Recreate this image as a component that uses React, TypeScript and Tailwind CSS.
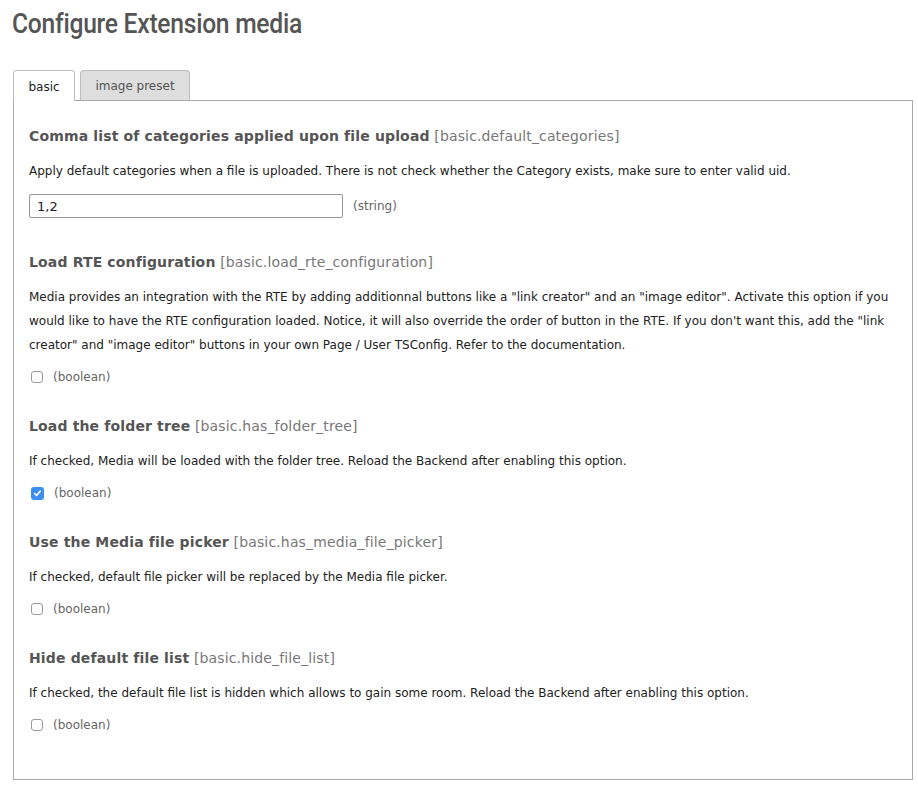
import React from 'react'

type Field = {
  title: string
  key: string
  desc: string
  type: 'string' | 'boolean'
  value?: string
  checked?: boolean
}

const fields: Field[] = [
  {
    title: 'Comma list of categories applied upon file upload',
    key: '[basic.default_categories]',
    desc: 'Apply default categories when a file is uploaded. There is not check whether the Category exists, make sure to enter valid uid.',
    type: 'string',
    value: '1,2',
  },
  {
    title: 'Load RTE configuration',
    key: '[basic.load_rte_configuration]',
    desc: 'Media provides an integration with the RTE by adding additionnal buttons like a "link creator" and an "image editor". Activate this option if you would like to have the RTE configuration loaded. Notice, it will also override the order of button in the RTE. If you don\'t want this, add the "link creator" and "image editor" buttons in your own Page / User TSConfig. Refer to the documentation.',
    type: 'boolean',
  },
  {
    title: 'Load the folder tree',
    key: '[basic.has_folder_tree]',
    desc: 'If checked, Media will be loaded with the folder tree. Reload the Backend after enabling this option.',
    type: 'boolean',
    checked: true,
  },
  {
    title: 'Use the Media file picker',
    key: '[basic.has_media_file_picker]',
    desc: 'If checked, default file picker will be replaced by the Media file picker.',
    type: 'boolean',
  },
  {
    title: 'Hide default file list',
    key: '[basic.hide_file_list]',
    desc: 'If checked, the default file list is hidden which allows to gain some room. Reload the Backend after enabling this option.',
    type: 'boolean',
  },
]

function Checkbox({ checked }: { checked?: boolean }) {
  if (checked) {
    return (
      <span className="flex h-[13px] w-[13px] items-center justify-center rounded-[3px] bg-[#3b8ff0]">
        <svg width="9" height="9" viewBox="0 0 9 9" fill="none">
          <path d="M1.8 4.6L3.6 6.4L7.2 2.2" stroke="white" strokeWidth="1.6" strokeLinecap="round" strokeLinejoin="round" />
        </svg>
      </span>
    )
  }
  return <span className="block h-[12px] w-[12px] rounded-[3px] border border-[#9a9a9a] bg-white" />
}

export default function App() {
  return (
    <div className="min-h-[787px] bg-white pl-[13px] pr-[5px] pt-[6px] font-['DejaVu_Sans',Verdana,sans-serif] text-[#333]">
      <h1 className="-ml-[1px] inline-block origin-left scale-x-[0.88] font-['Roboto',sans-serif] text-[28px] font-medium leading-[36px] tracking-[-0.3px] text-[#555]">
        Configure Extension media
      </h1>

      {/* Tabs */}
      <div className="mt-[28px] flex items-end gap-[5px]">
        <div className="relative z-10 -mb-px flex h-[31px] w-[62px] items-center justify-center rounded-t-[4px] border border-b-0 border-[#bbb] bg-white pt-[2px] text-[12px] text-[#222]">
          basic
        </div>
        <div className="flex h-[30px] w-[110px] items-center justify-center rounded-t-[4px] border border-b-0 border-[#bbb] bg-[#dedede] text-[12px] text-[#555]">
          image preset
        </div>
      </div>

      {/* Panel */}
      <div className="w-[900px] border border-[#aaa] px-[15px] pb-[42px] pt-[25px]">
        {fields.map((f, i) => (
          <div key={f.key} className={i === 0 ? '' : fields[i - 1].type === 'string' ? 'mt-[34px]' : 'mt-[27px]'}>
            <h3 className="text-[14px] leading-[20px] tracking-[0.15px]">
              <span className="font-bold text-[#555]">{f.title}</span>{' '}
              <span className="text-[#777]">{f.key}</span>
            </h3>
            <p className="mt-[13px] text-[12px] leading-[24px] text-[#222]">{f.desc}</p>
            {f.type === 'string' ? (
              <div className="mt-[11px] flex items-center gap-[10px]">
                <input
                  defaultValue={f.value}
                  className="h-[24px] w-[314px] rounded-[2px] border border-[#999] px-[7px] text-[13px] text-[#222] outline-none"
                />
                <span className="text-[12px] text-[#666]">(string)</span>
              </div>
            ) : (
              <div className="mt-[8px] flex h-[24px] items-center gap-[10px] pl-[2px]">
                <Checkbox checked={f.checked} />
                <span className="text-[12px] text-[#666]">(boolean)</span>
              </div>
            )}
          </div>
        ))}
      </div>
    </div>
  )
}
